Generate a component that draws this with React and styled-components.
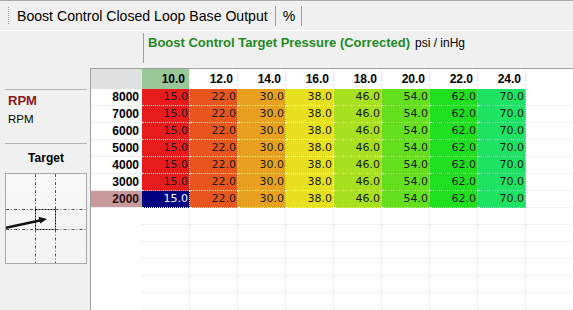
import React from "react";
import styled, { createGlobalStyle } from "styled-components";

const Global = createGlobalStyle`
  html, body { margin: 0; padding: 0; }
  body {
    width: 573px; height: 310px; overflow: hidden;
    background: #f0f0f0;
    font-family: "Liberation Sans", Arial, sans-serif;
  }
  * { box-sizing: border-box; }
`;

const Page = styled.div`
  width: 573px;
  height: 310px;
  display: flex;
  flex-direction: column;
  overflow: hidden;
`;

const TopBar = styled.div`
  height: 31px;
  flex: none;
  border-top: 1px solid #a8a8a8;
  border-bottom: 1px solid #ffffff;
  background: #f0f0f0;
  display: flex;
  align-items: center;
  padding-left: 8px;
`;

const Grip = styled.div`
  width: 1px;
  height: 17px;
  border-left: 1px dotted #a0a0a0;
  margin-right: 8px;
`;

const TabLabel = styled.span`
  font-size: 14.1px;
  color: #000;
  white-space: nowrap;
`;

const TabSep = styled.div`
  width: 1px;
  height: 20px;
  background: #a0a0a0;
  margin: 0 ${(p) => p.$gap || 7}px;
`;

const TitleRow = styled.div`
  height: 37px;
  flex: none;
  display: flex;
  padding-left: 143px;
`;

const TitleDivider = styled.div`
  width: 1px;
  height: 30px;
  margin-top: 2px;
  background: #a0a0a0;
`;

const TitleText = styled.span`
  margin: 4px 0 0 4px;
  line-height: 16px;
  font-size: 13px;
  font-weight: bold;
  color: #1e8a1e;
  white-space: nowrap;
`;

const UnitText = styled.span`
  margin: 4px 0 0 5px;
  line-height: 16px;
  font-size: 12px;
  color: #000;
  white-space: nowrap;
`;

const Main = styled.div`
  flex: 1;
  display: flex;
  min-height: 0;
`;

const LeftPanel = styled.div`
  width: 90px;
  flex: none;
  padding: 21px 3px 0 5px;
  display: flex;
  flex-direction: column;
`;

const Rule = styled.div`
  height: 1px;
  background: #b4b4b4;
  margin-top: ${(p) => p.$mt || 0}px;
`;

const AxisName = styled.div`
  margin-top: 3px;
  padding-left: 3px;
  line-height: 16px;
  font-size: 13px;
  font-weight: bold;
  color: #8c1a1a;
`;

const AxisUnit = styled.div`
  margin-top: 2px;
  padding-left: 3px;
  line-height: 16px;
  font-size: 11.5px;
  color: #000;
`;

const SectionLabel = styled.div`
  margin-top: 6px;
  line-height: 16px;
  font-size: 12px;
  font-weight: bold;
  text-align: center;
  color: #000;
`;

const ChartBox = styled.div`
  margin-top: 7px;
  width: 82px;
  height: 91px;
  border: 1px solid #a8a8a8;
  background: linear-gradient(180deg, #f8f8f8 0%, #f3f3f3 100%);
  overflow: hidden;
  display: flex;
`;

const TablePanel = styled.div`
  flex: 1;
  background: #ffffff;
  border-top: 1px solid #a0a0a0;
  border-left: 1px solid #a0a0a0;
  overflow: hidden;
`;

const Grid = styled.div`
  display: grid;
  grid-template-columns: 51px repeat(9, 48px);
  grid-template-rows: 20px;
  grid-auto-rows: 17px;
`;

const Corner = styled.div`
  background: #e0e0e0;
`;

const ColHead = styled.div`
  background: ${(p) => (p.$active ? "#98c898" : "#ffffff")};
  border-right: 1px solid ${(p) => (p.$blank ? "transparent" : "#ebebeb")};
  font-size: 12px;
  font-weight: bold;
  line-height: 20px;
  text-align: right;
  padding-right: 4px;
  color: #000;
`;

const RowHead = styled.div`
  background: ${(p) => (p.$active ? "#c89a9c" : "#ffffff")};
  border-bottom: 1px solid ${(p) => (p.$blank ? "transparent" : "#ececec")};
  font-size: 12px;
  font-weight: bold;
  line-height: 16px;
  text-align: right;
  padding-right: 3px;
  color: ${(p) => (p.$active ? "#2a1010" : "#000")};
`;

const DataCell = styled.div`
  background: ${(p) => (p.$selected ? "#000080" : p.$bg)};
  color: ${(p) => (p.$selected ? "#ffffff" : "#1a1a1a")};
  border-right: 1px dotted #ffffff;
  border-bottom: 1px dotted #ffffff;
  font-family: "DejaVu Sans", Tahoma, sans-serif;
  font-size: 11px;
  line-height: 16px;
  text-align: right;
  padding-right: 1px;
`;

const EmptyCell = styled.div`
  border-right: 1px dotted #e4e4e4;
  border-bottom: 1px dotted #e4e4e4;
`;

const cols = ["10.0", "12.0", "14.0", "16.0", "18.0", "20.0", "22.0", "24.0"];
const rows = ["8000", "7000", "6000", "5000", "4000", "3000", "2000"];
const values = ["15.0", "22.0", "30.0", "38.0", "46.0", "54.0", "62.0", "70.0"];
const colors = [
  "#e81c1c",
  "#e8561e",
  "#e8a01e",
  "#e6e01e",
  "#a6e01e",
  "#62e01e",
  "#1ee01e",
  "#1ee262",
];

function TargetChart() {
  return (
    <svg width="80" height="89" viewBox="0 0 80 89">
      <g stroke="#555" strokeWidth="1" strokeDasharray="3 2 1 2" fill="none">
        <line x1="29.5" y1="0" x2="29.5" y2="35.5" />
        <line x1="29.5" y1="55.5" x2="29.5" y2="89" />
        <line x1="49.5" y1="0" x2="49.5" y2="35.5" />
        <line x1="49.5" y1="55.5" x2="49.5" y2="89" />
        <line x1="0" y1="35.5" x2="29.5" y2="35.5" />
        <line x1="49.5" y1="35.5" x2="80" y2="35.5" />
        <line x1="0" y1="55.5" x2="29.5" y2="55.5" />
        <line x1="49.5" y1="55.5" x2="80" y2="55.5" />
      </g>
      <rect
        x="29.5"
        y="35.5"
        width="20"
        height="20"
        fill="none"
        stroke="#000"
        strokeWidth="1"
        strokeDasharray="2 1"
      />
      <line x1="-1" y1="54" x2="35" y2="46.3" stroke="#111" strokeWidth="2.6" />
      <polygon points="41,45 32.5,42.8 34.2,49.4" fill="#111" />
    </svg>
  );
}

export default function App() {
  const emptyRows = 7;
  return (
    <Page>
      <Global />
      <TopBar>
        <Grip />
        <TabLabel>Boost Control Closed Loop Base Output</TabLabel>
        <TabSep $gap={7} />
        <TabLabel>%</TabLabel>
        <TabSep $gap={6} />
      </TopBar>
      <TitleRow>
        <TitleDivider />
        <TitleText>Boost Control Target Pressure (Corrected)</TitleText>
        <UnitText>psi / inHg</UnitText>
      </TitleRow>
      <Main>
        <LeftPanel>
          <Rule />
          <AxisName>RPM</AxisName>
          <AxisUnit>RPM</AxisUnit>
          <Rule $mt={16} />
          <SectionLabel>Target</SectionLabel>
          <ChartBox>
            <TargetChart />
          </ChartBox>
        </LeftPanel>
        <TablePanel>
          <Grid>
            <Corner />
            {cols.map((c, i) => (
              <ColHead key={c} $active={i === 0}>
                {c}
              </ColHead>
            ))}
            <ColHead $blank />
            {rows.map((r) => (
              <React.Fragment key={r}>
                <RowHead $active={r === "2000"}>{r}</RowHead>
                {values.map((v, ci) => (
                  <DataCell
                    key={ci}
                    $bg={colors[ci]}
                    $selected={r === "2000" && ci === 0}
                  >
                    {v}
                  </DataCell>
                ))}
                <EmptyCell />
              </React.Fragment>
            ))}
            {Array.from({ length: emptyRows }).map((_, ri) => (
              <React.Fragment key={"e" + ri}>
                <RowHead $blank />
                {Array.from({ length: 9 }).map((__, ci) => (
                  <EmptyCell key={ci} />
                ))}
              </React.Fragment>
            ))}
          </Grid>
        </TablePanel>
      </Main>
    </Page>
  );
}
